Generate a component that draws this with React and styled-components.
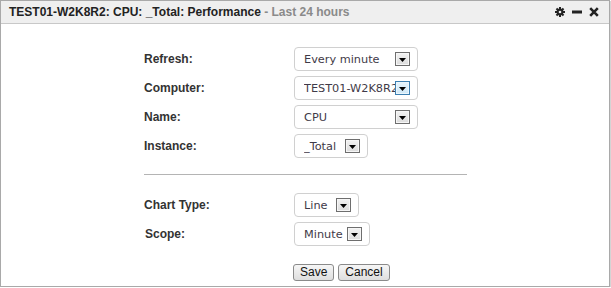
import React from "react";
import styled, { createGlobalStyle } from "styled-components";

const GlobalStyle = createGlobalStyle`
  html, body {
    margin: 0;
    padding: 0;
    background: #fff;
  }
  body {
    font-family: "Liberation Sans", Arial, sans-serif;
  }
`;

const fields = [
  { label: "Refresh:", value: "Every minute", width: 124 },
  { label: "Computer:", value: "TEST01-W2K8R2", width: 124, active: true },
  { label: "Name:", value: "CPU", width: 124 },
  { label: "Instance:", value: "_Total", width: 74 },
];

const chartFields = [
  { label: "Chart Type:", value: "Line", width: 65 },
  { label: "Scope:", value: "Minute", width: 76, indent: true },
];

const GearIcon = () => (
  <svg width="10" height="10" viewBox="0 0 10 10">
    <g fill="#222">
      <circle cx="5" cy="5" r="3.4" />
      <rect x="4" y="0" width="2" height="10" />
      <rect x="0" y="4" width="10" height="2" />
      <rect x="4" y="0" width="2" height="10" transform="rotate(45 5 5)" />
      <rect x="4" y="0" width="2" height="10" transform="rotate(-45 5 5)" />
    </g>
    <circle cx="5" cy="5" r="1.3" fill="#eee" />
  </svg>
);

const MinusIcon = () => (
  <svg width="10" height="10" viewBox="0 0 10 10">
    <rect x="0" y="3.5" width="10" height="3" fill="#222" />
  </svg>
);

const CloseIcon = () => (
  <svg width="10" height="10" viewBox="0 0 10 10">
    <path d="M1.2 1.2 L8.8 8.8 M8.8 1.2 L1.2 8.8" stroke="#222" strokeWidth="2.6" />
  </svg>
);

const SelectBox = ({ value, width, active }) => (
  <Select $width={width}>
    <SelectText>{value}</SelectText>
    <DropButton $active={active}>
      <svg width="7" height="4" viewBox="0 0 7 4">
        <path d="M0 0 H7 L3.5 4 Z" fill="#000" />
      </svg>
    </DropButton>
  </Select>
);

export default function App() {
  return (
    <>
      <GlobalStyle />
      <Panel>
        <Header>
          <Title>
            TEST01-W2K8R2: CPU: _Total: Performance <Muted>- Last 24 hours</Muted>
          </Title>
          <Tools>
            <GearIcon />
            <MinusIcon />
            <CloseIcon />
          </Tools>
        </Header>
        <Body>
          <Form>
            {fields.map((f) => (
              <React.Fragment key={f.label}>
                <Label>{f.label}</Label>
                <div>
                  <SelectBox value={f.value} width={f.width} active={f.active} />
                </div>
              </React.Fragment>
            ))}
          </Form>
          <Divider />
          <Form>
            {chartFields.map((f) => (
              <React.Fragment key={f.label}>
                <Label $indent={f.indent}>{f.label}</Label>
                <div>
                  <SelectBox value={f.value} width={f.width} />
                </div>
              </React.Fragment>
            ))}
          </Form>
          <Actions>
            <Button>Save</Button>
            <Button>Cancel</Button>
          </Actions>
        </Body>
      </Panel>
    </>
  );
}

const Panel = styled.div`
  width: 608px;
  height: 285px;
  border: 1px solid #a9a9a9;
  box-shadow: 1px 1px 0 #d4d4d4;
  background: #fff;
  display: flex;
  flex-direction: column;
`;

const Header = styled.div`
  height: 22px;
  background: #efefef;
  border-bottom: 1px solid #c8c8c8;
  display: flex;
  align-items: center;
  justify-content: space-between;
  padding: 0 10px 0 8px;
`;

const Title = styled.div`
  font-size: 12px;
  font-weight: bold;
  color: #222;
`;

const Muted = styled.span`
  color: #8a8a8a;
`;

const Tools = styled.div`
  display: flex;
  align-items: center;
  gap: 7px;
`;

const Body = styled.div`
  padding: 23px 0 0 143px;
`;

const Form = styled.div`
  display: grid;
  grid-template-columns: 150px auto;
  grid-auto-rows: 24px;
  row-gap: 5px;
  align-items: center;
`;

const Label = styled.div`
  font-size: 12px;
  font-weight: bold;
  color: #333;
  padding-left: ${(p) => (p.$indent ? "1px" : "0")};
`;

const Select = styled.div`
  box-sizing: border-box;
  display: inline-flex;
  align-items: center;
  height: 24px;
  width: ${(p) => p.$width}px;
  padding: 0 7px 0 9px;
  border: 1px solid #d0d0d0;
  border-radius: 4px;
  background: #fff;
`;

const SelectText = styled.span`
  flex: 1;
  min-width: 0;
  overflow: hidden;
  white-space: nowrap;
  font-family: "DejaVu Sans", Verdana, sans-serif;
  font-size: 11.3px;
  color: #3f3a48;
`;

const DropButton = styled.span`
  box-sizing: border-box;
  flex: none;
  width: 15px;
  height: 14px;
  display: flex;
  align-items: flex-end;
  justify-content: center;
  padding-bottom: 3px;
  border: 1px solid ${(p) => (p.$active ? "#3c7fb1" : "#6e6e6e")};
  background: ${(p) =>
    p.$active
      ? "linear-gradient(#e6f4fc, #cfe8f7)"
      : "linear-gradient(#f2f2f2, #dcdcdc)"};
  box-shadow: inset 0 0 0 1px ${(p) => (p.$active ? "#eaf6fd" : "#f6f6f6")};
`;

const Divider = styled.div`
  width: 323px;
  height: 1px;
  background: #b4b4b4;
  margin: 16px 0 18px;
`;

const Actions = styled.div`
  display: flex;
  gap: 4px;
  margin: 18px 0 0 149px;
`;

const Button = styled.button`
  height: 17px;
  padding: 0 6px;
  font-family: "Liberation Sans", Arial, sans-serif;
  font-size: 12px;
  color: #111;
  border: 1px solid #8a8a8a;
  border-radius: 3px;
  background: linear-gradient(#f6f6f6, #dedede);
  line-height: 15px;
`;
